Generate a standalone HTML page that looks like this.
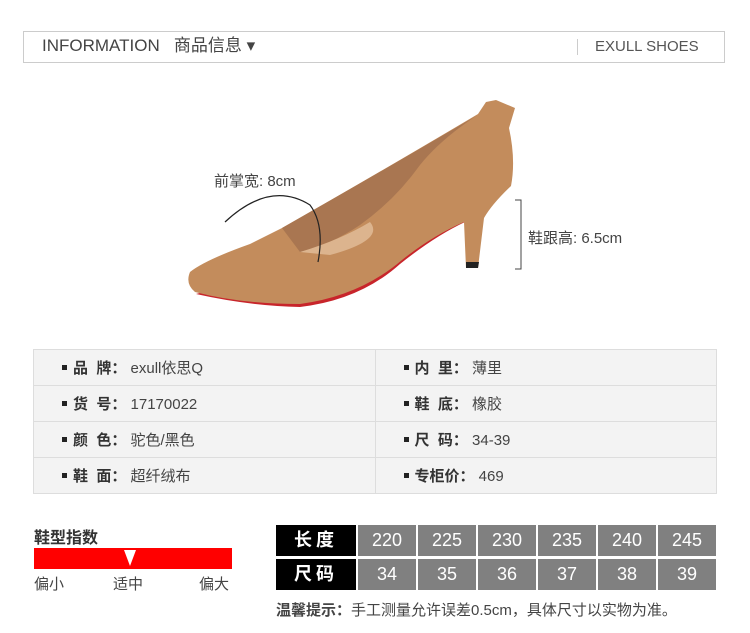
<!DOCTYPE html>
<html><head><meta charset="utf-8"><style>
*{margin:0;padding:0;box-sizing:border-box}
body{width:750px;height:633px;background:#fff;position:relative;overflow:hidden;font-family:"Liberation Sans","Noto Sans CJK SC",sans-serif;color:#333}
.a{position:absolute}
.hdr{left:23px;top:31px;width:702px;height:32px;border:1px solid #ccc}
.tbl{left:33px;top:349px;width:684px;border-collapse:collapse;background:#f3f3f3}
.tbl td{border:1px solid #ddd;height:36px;font-size:15px;color:#444;padding-left:28px;width:342px}
.tbl b{color:#333}
.sq{display:inline-block;width:5px;height:5px;background:#222;margin-right:6px;vertical-align:middle;position:relative;top:-2px}
.c{position:absolute;height:31px;text-align:center;line-height:31px;font-size:18px;color:#fff}
.k{background:#000;font-weight:bold;letter-spacing:4px}
.g{background:#808080;width:58px}
</style></head><body>
<div class="a hdr"></div>
<div class="a" style="left:42px;top:36px;font-size:17px;line-height:20px;color:#444">INFORMATION&nbsp;&nbsp;&nbsp;商品信息 ▾</div>
<div class="a" style="left:577px;top:39px;width:1px;height:16px;background:#ccc"></div>
<div class="a" style="left:595px;top:38px;font-size:15px;line-height:18px;color:#555">EXULL SHOES</div>

<svg class="a" style="left:0;top:0" width="750" height="340">
<path d="M196,294 Q250,306 300,307 Q360,300 400,264 Q435,236 465,222 L468,262 L472,262 L474,218 Z" fill="#c8252b"/>
<path d="M190,272 Q205,260 250,244 L282,228 Q370,178 478,114 L486,102 L496,100 L515,108 L509,128 Q516,160 511,186 Q492,204 484,218 L478,268 L466,268 L464,222 Q432,236 402,260 Q360,296 300,304 Q240,304 195,292 Q185,284 190,272 Z" fill="#c38c5c"/>
<path d="M282,228 Q370,178 476,116 Q440,140 420,165 Q395,200 360,225 Q330,245 300,252 Z" fill="#a97651"/>
<path d="M300,252 Q340,240 370,222 Q385,240 330,255 Z" fill="#dcb48e"/>
<path d="M466,262 L479,262 L478,268 L466,268Z" fill="#222"/>
<path d="M225,222 Q270,180 310,205 Q325,225 318,262" fill="none" stroke="#222" stroke-width="1.2"/>
<path d="M515,200 L521,200 L521,269 L515,269" fill="none" stroke="#444" stroke-width="1"/>
</svg>
<div class="a" style="left:214px;top:170px;font-size:15px;color:#444">前掌宽: 8cm</div>
<div class="a" style="left:528px;top:227px;font-size:15px;color:#444">鞋跟高: 6.5cm</div>

<table class="a tbl">
<tr><td><span class="sq"></span><b>品&nbsp;&nbsp;牌：</b> exull依思Q</td><td><span class="sq"></span><b>内&nbsp;&nbsp;里：</b> 薄里</td></tr>
<tr><td><span class="sq"></span><b>货&nbsp;&nbsp;号：</b> 17170022</td><td><span class="sq"></span><b>鞋&nbsp;&nbsp;底：</b> 橡胶</td></tr>
<tr><td><span class="sq"></span><b>颜&nbsp;&nbsp;色：</b> 驼色/黑色</td><td><span class="sq"></span><b>尺&nbsp;&nbsp;码：</b> 34-39</td></tr>
<tr><td><span class="sq"></span><b>鞋&nbsp;&nbsp;面：</b> 超纤绒布</td><td><span class="sq"></span><b>专柜价：</b> 469</td></tr>
</table>

<div class="a" style="left:34px;top:524px;font-size:16px;font-weight:bold;color:#333">鞋型指数</div>
<div class="a" style="left:34px;top:548px;width:198px;height:21px;background:#f00"></div>
<div class="a" style="left:124px;top:550px;width:0;height:0;border-left:6px solid transparent;border-right:6px solid transparent;border-top:16px solid #fff"></div>
<div class="a" style="left:34px;top:573px;font-size:15px;color:#444">偏小</div>
<div class="a" style="left:113px;top:573px;font-size:15px;color:#444">适中</div>
<div class="a" style="left:199px;top:573px;font-size:15px;color:#444">偏大</div>

<div class="c k" style="left:276px;top:525px;width:80px">长度</div>
<div class="c k" style="left:276px;top:559px;width:80px">尺码</div>
<div class="c g" style="left:358px;top:525px">220</div>
<div class="c g" style="left:418px;top:525px">225</div>
<div class="c g" style="left:478px;top:525px">230</div>
<div class="c g" style="left:538px;top:525px">235</div>
<div class="c g" style="left:598px;top:525px">240</div>
<div class="c g" style="left:658px;top:525px">245</div>
<div class="c g" style="left:358px;top:559px">34</div>
<div class="c g" style="left:418px;top:559px">35</div>
<div class="c g" style="left:478px;top:559px">36</div>
<div class="c g" style="left:538px;top:559px">37</div>
<div class="c g" style="left:598px;top:559px">38</div>
<div class="c g" style="left:658px;top:559px">39</div>
<div class="a" style="left:276px;top:599px;font-size:15px;color:#444"><b>温馨提示：</b>手工测量允许误差0.5cm，具体尺寸以实物为准。</div>
</body></html>
